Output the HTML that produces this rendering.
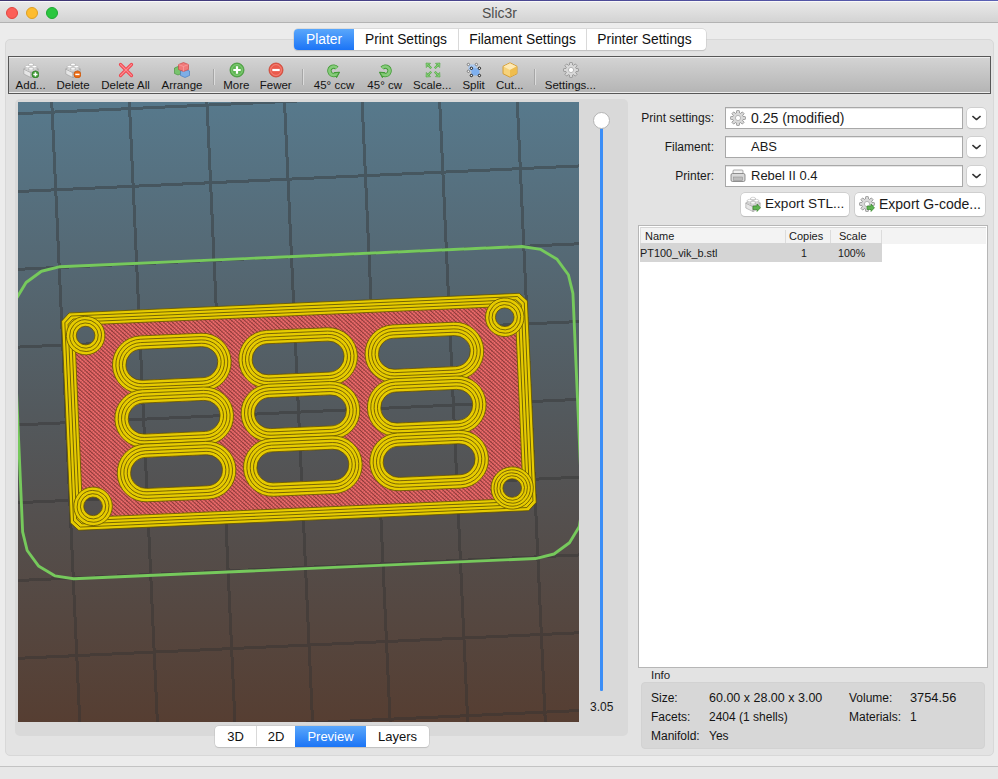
<!DOCTYPE html>
<html><head><meta charset="utf-8">
<style>
*{box-sizing:border-box;margin:0;padding:0}
html,body{width:998px;height:779px;overflow:hidden}
body{position:relative;background:#ececec;font-family:"Liberation Sans",sans-serif;color:#1a1a1a}
.a{position:absolute}
.t{position:absolute;white-space:nowrap;line-height:1}
#topline{left:0;top:0;width:998px;height:1px;background:linear-gradient(90deg,#3e3470,#4a4690 50%,#5a60b4)}
#titlebar{left:0;top:1px;width:998px;height:22px;background:linear-gradient(#e9e9e9,#d3d3d3);border-top:1px solid #f9f9f9;border-bottom:1px solid #b3b3b3}
.tl{position:absolute;top:5px;width:12px;height:12px;border-radius:50%}
#panel{left:5px;top:39px;width:989px;height:717px;background:#e3e3e3;border:1px solid #d8d8d8;border-radius:5px}
#tabs{left:294px;top:29px;width:412px;height:20.5px;background:#fff;border-radius:4px;box-shadow:0 0 0 0.5px #c8c8c8,0 1px 1px rgba(0,0,0,0.18)}
.seg{position:absolute;top:0;height:20.5px;font-size:13.8px;text-align:center;line-height:21px;color:#111}
.sel{background:linear-gradient(#5aa7fb,#1b74f6);color:#fff}
.sep{position:absolute;top:0;width:1px;height:20.5px;background:#d9d9d9}
#toolbar{left:8px;top:56px;width:983px;height:38px;border:1px solid #575757;background:#ededed}
#tbin{position:absolute;left:0;top:1px;right:0;bottom:1px;background:linear-gradient(#d3d3d3,#b5b5b5)}
.lbl{position:absolute;top:80px;font-size:11.5px;color:#141414;transform:translateX(-50%);white-space:nowrap;line-height:1}
.ic{position:absolute;top:62px;width:16px;height:16px}
.tsep{position:absolute;top:69px;width:1px;height:16px;background:#a6a6a6;box-shadow:1px 0 0 #dcdcdc}
#leftc{left:15px;top:99px;width:613px;height:637px;background:#d9d9d9;border-radius:5px}
#vp{left:18px;top:102px;width:561px;height:620px}
.rl{position:absolute;font-size:12px;color:#1a1a1a;text-align:right;white-space:nowrap;line-height:1}
.combo{position:absolute;left:725px;width:238px;height:22px;background:#fff;border:1px solid #a8a8a8;box-shadow:inset 0 1px 0 #e6e6e6}
.ddb{position:absolute;left:967px;width:19px;height:20px;background:#fff;border-radius:4px;box-shadow:0 0 0 0.5px #bdbdbd,0 1px 1px rgba(0,0,0,0.15)}
.btn{position:absolute;top:193px;height:23px;background:#fff;border-radius:4px;box-shadow:0 0 0 0.5px #bcbcbc,0 1px 1px rgba(0,0,0,0.15)}
#list{left:638px;top:225px;width:350px;height:443px;background:#fff;border:1px solid #b6b6b6}
#info{left:641px;top:682px;width:344px;height:67px;background:#d7d7d7;border:1px solid #d2d2d2;border-radius:4px}
.it{position:absolute;font-size:12px;color:#141414;white-space:nowrap;line-height:1}
#vbtns{left:215px;top:726px;width:214px;height:20.5px;background:#fff;border-radius:4px;box-shadow:0 0 0 0.5px #c0c0c0,0 1px 1px rgba(0,0,0,0.15)}
.vseg{position:absolute;top:0;height:20.5px;font-size:13px;text-align:center;line-height:21px;color:#111}
.vseg.sel,.seg.sel{color:#fff}
#status{left:0;top:766px;width:998px;height:13px;background:#e7e7e7;border-top:1px solid #c3c3c3}
</style></head><body>
<div class="a" id="topline"></div>
<div class="a" id="titlebar">
 <div class="tl" style="left:6px;background:#fc5f58;border:1px solid #e1463f"></div>
 <div class="tl" style="left:26px;background:#fdbc2f;border:1px solid #de9f22"></div>
 <div class="tl" style="left:46px;background:#2bc63f;border:1px solid #1ea831"></div>
 <div class="t" style="left:482px;top:4px;font-size:14px;color:#4d4d4d">Slic3r</div>
</div>
<div class="a" id="panel"></div>
<div class="a" id="tabs">
 <div class="seg sel" style="left:0;width:60px;border-radius:4px 0 0 4px">Plater</div>
 <div class="seg" style="left:60px;width:104px">Print Settings</div>
 <div class="sep" style="left:164px"></div>
 <div class="seg" style="left:165px;width:127px">Filament Settings</div>
 <div class="sep" style="left:292px"></div>
 <div class="seg" style="left:291px;width:119px">Printer Settings</div>
</div>
<div class="a" id="toolbar"><div id="tbin"></div></div>
<div class="lbl" style="left:30.6px">Add...</div>
<div class="lbl" style="left:73.1px">Delete</div>
<div class="lbl" style="left:125.5px">Delete All</div>
<div class="lbl" style="left:182px">Arrange</div>
<div class="lbl" style="left:236.3px">More</div>
<div class="lbl" style="left:275.7px">Fewer</div>
<div class="lbl" style="left:334px">45° ccw</div>
<div class="lbl" style="left:384.7px">45° cw</div>
<div class="lbl" style="left:432.2px">Scale...</div>
<div class="lbl" style="left:473.6px">Split</div>
<div class="lbl" style="left:509.8px">Cut...</div>
<div class="lbl" style="left:570.3px">Settings...</div>
<svg class="a" style="left:23px;top:62px" width="16" height="16" viewBox="0 0 16 16"><g stroke="#9c9c9c" stroke-width="0.6" stroke-linejoin="round">
<path d="M0.8,7 L8,10.6 L8,15.6 L0.8,12 Z" fill="#e6e6e6"/>
<path d="M8,10.6 L15.2,7 L15.2,12 L8,15.6 Z" fill="#cdcdcd"/>
<path d="M0.8,7 L8,3.4 L15.2,7 L8,10.6 Z" fill="#f6f6f6"/>
</g><path d="M5.6,2.4 V4.0 A2.4,1.2 0 0 0 10.4,4.0 V2.4 Z" fill="#e2e2e2" stroke="#a0a0a0" stroke-width="0.45"/><ellipse cx="8" cy="2.4" rx="2.4" ry="1.2" fill="#ffffff" stroke="#a8a8a8" stroke-width="0.45"/><path d="M2.1999999999999997,4.6 V6.199999999999999 A2.4,1.2 0 0 0 7.0,6.199999999999999 V4.6 Z" fill="#e2e2e2" stroke="#a0a0a0" stroke-width="0.45"/><ellipse cx="4.6" cy="4.6" rx="2.4" ry="1.2" fill="#ffffff" stroke="#a8a8a8" stroke-width="0.45"/><path d="M9.0,4.6 V6.199999999999999 A2.4,1.2 0 0 0 13.8,6.199999999999999 V4.6 Z" fill="#e2e2e2" stroke="#a0a0a0" stroke-width="0.45"/><ellipse cx="11.4" cy="4.6" rx="2.4" ry="1.2" fill="#ffffff" stroke="#a8a8a8" stroke-width="0.45"/><path d="M5.6,6.8 V8.4 A2.4,1.2 0 0 0 10.4,8.4 V6.8 Z" fill="#e2e2e2" stroke="#a0a0a0" stroke-width="0.45"/><ellipse cx="8" cy="6.8" rx="2.4" ry="1.2" fill="#ffffff" stroke="#a8a8a8" stroke-width="0.45"/><circle cx="12.4" cy="12.4" r="3.5" fill="#3f9b34" stroke="#2b7a22" stroke-width="0.6"/><path d="M12.4,10.3 V14.5 M10.3,12.4 H14.5" stroke="#fff" stroke-width="1.5"/></svg>
<svg class="a" style="left:65px;top:62px" width="16" height="16" viewBox="0 0 16 16"><g stroke="#9c9c9c" stroke-width="0.6" stroke-linejoin="round">
<path d="M0.8,7 L8,10.6 L8,15.6 L0.8,12 Z" fill="#e6e6e6"/>
<path d="M8,10.6 L15.2,7 L15.2,12 L8,15.6 Z" fill="#cdcdcd"/>
<path d="M0.8,7 L8,3.4 L15.2,7 L8,10.6 Z" fill="#f6f6f6"/>
</g><path d="M5.6,2.4 V4.0 A2.4,1.2 0 0 0 10.4,4.0 V2.4 Z" fill="#e2e2e2" stroke="#a0a0a0" stroke-width="0.45"/><ellipse cx="8" cy="2.4" rx="2.4" ry="1.2" fill="#ffffff" stroke="#a8a8a8" stroke-width="0.45"/><path d="M2.1999999999999997,4.6 V6.199999999999999 A2.4,1.2 0 0 0 7.0,6.199999999999999 V4.6 Z" fill="#e2e2e2" stroke="#a0a0a0" stroke-width="0.45"/><ellipse cx="4.6" cy="4.6" rx="2.4" ry="1.2" fill="#ffffff" stroke="#a8a8a8" stroke-width="0.45"/><path d="M9.0,4.6 V6.199999999999999 A2.4,1.2 0 0 0 13.8,6.199999999999999 V4.6 Z" fill="#e2e2e2" stroke="#a0a0a0" stroke-width="0.45"/><ellipse cx="11.4" cy="4.6" rx="2.4" ry="1.2" fill="#ffffff" stroke="#a8a8a8" stroke-width="0.45"/><path d="M5.6,6.8 V8.4 A2.4,1.2 0 0 0 10.4,8.4 V6.8 Z" fill="#e2e2e2" stroke="#a0a0a0" stroke-width="0.45"/><ellipse cx="8" cy="6.8" rx="2.4" ry="1.2" fill="#ffffff" stroke="#a8a8a8" stroke-width="0.45"/><circle cx="12.4" cy="12.4" r="3.5" fill="#ea6a12" stroke="#c24f05" stroke-width="0.6"/><path d="M10.3,12.4 H14.5" stroke="#fff" stroke-width="1.5"/></svg>
<svg class="a" style="left:118px;top:62px" width="16" height="16" viewBox="0 0 16 16"><path d="M2.5,2.5 L13.5,13.5 M13.5,2.5 L2.5,13.5" stroke="#f0454e" stroke-width="3.2" stroke-linecap="round"/><path d="M2.5,2.5 L13.5,13.5 M13.5,2.5 L2.5,13.5" stroke="#ff8a8f" stroke-width="1.2" stroke-linecap="round"/></svg>
<svg class="a" style="left:174px;top:62px" width="16" height="16" viewBox="0 0 16 16"><path d="M0.5,6 L4,4.5 L7.5,6 L7.5,11.5 L4,13 L0.5,11.5 Z" fill="#79c36d" stroke="#3c8f33" stroke-width="0.6"/>
<path d="M6.5,9 L11,7 L15.5,9 L15.5,13.5 L11,15.5 L6.5,13.5 Z" fill="#7eaee6" stroke="#3a74c0" stroke-width="0.6"/>
<path d="M4.5,2.5 L9.5,0.5 L14.5,2.5 L14.5,7.5 L9.5,9.5 L4.5,7.5 Z" fill="#f07a7a" stroke="#c83c3c" stroke-width="0.6"/>
<path d="M4.5,2.5 L9.5,4.5 L14.5,2.5 M9.5,4.5 V9.5" fill="none" stroke="#ffb0b0" stroke-width="0.5"/></svg>
<svg class="a" style="left:229px;top:62px" width="16" height="16" viewBox="0 0 16 16"><circle cx="8" cy="8" r="7" fill="#5fb653" stroke="#3b9131" stroke-width="0.8"/><circle cx="8" cy="8" r="5.4" fill="none" stroke="#9ad690" stroke-width="0.6"/><path d="M8,4.3 V11.7 M4.3,8 H11.7" stroke="#fff" stroke-width="2.2"/></svg>
<svg class="a" style="left:268px;top:62px" width="16" height="16" viewBox="0 0 16 16"><circle cx="8" cy="8" r="7" fill="#ea5a4c" stroke="#c9402f" stroke-width="0.8"/><circle cx="8" cy="8" r="5.4" fill="none" stroke="#f6a398" stroke-width="0.6"/><path d="M4.3,8 H11.7" stroke="#fff" stroke-width="2.2"/></svg>
<svg class="a" style="left:326px;top:63px" width="16" height="16" viewBox="0 0 16 16"><path d="M10.82,5.10 A4.2,4.2 0 1 0 10.01,11.24" fill="none" stroke="#3f9a33" stroke-width="4.4"/><path d="M8.2,9.6 L13.6,9.2 L10.6,14.6 Z" fill="#3f9a33" stroke="#3f9a33" stroke-width="1" stroke-linejoin="round"/><path d="M10.82,5.10 A4.2,4.2 0 1 0 10.01,11.24" fill="none" stroke="#86cb7a" stroke-width="2.8"/><path d="M9.3,10.2 L12.3,10 L10.6,13 Z" fill="#86cb7a"/></svg>
<svg class="a" style="left:377px;top:63px" width="16" height="16" viewBox="0 0 16 16"><g transform="translate(16,0) scale(-1,1)"><path d="M10.82,5.10 A4.2,4.2 0 1 0 10.01,11.24" fill="none" stroke="#3f9a33" stroke-width="4.4"/><path d="M8.2,9.6 L13.6,9.2 L10.6,14.6 Z" fill="#3f9a33" stroke="#3f9a33" stroke-width="1" stroke-linejoin="round"/><path d="M10.82,5.10 A4.2,4.2 0 1 0 10.01,11.24" fill="none" stroke="#86cb7a" stroke-width="2.8"/><path d="M9.3,10.2 L12.3,10 L10.6,13 Z" fill="#86cb7a"/></g></svg>
<svg class="a" style="left:425px;top:62px" width="16" height="16" viewBox="0 0 16 16"><path d="M1,1 L5.6,1.3 L1.3,5.6 Z" fill="#8ad27c" stroke="#4ca23e" stroke-width="0.6" stroke-linejoin="round"/><path d="M2.8,2.8 L6.2,6.2" stroke="#4ca23e" stroke-width="2.2"/><path d="M2.8,2.8 L6.1,6.1" stroke="#8ad27c" stroke-width="1.1"/><g transform="translate(16,0) scale(-1,1)"><path d="M1,1 L5.6,1.3 L1.3,5.6 Z" fill="#8ad27c" stroke="#4ca23e" stroke-width="0.6" stroke-linejoin="round"/><path d="M2.8,2.8 L6.2,6.2" stroke="#4ca23e" stroke-width="2.2"/><path d="M2.8,2.8 L6.1,6.1" stroke="#8ad27c" stroke-width="1.1"/></g><g transform="translate(0,16) scale(1,-1)"><path d="M1,1 L5.6,1.3 L1.3,5.6 Z" fill="#8ad27c" stroke="#4ca23e" stroke-width="0.6" stroke-linejoin="round"/><path d="M2.8,2.8 L6.2,6.2" stroke="#4ca23e" stroke-width="2.2"/><path d="M2.8,2.8 L6.1,6.1" stroke="#8ad27c" stroke-width="1.1"/></g><g transform="translate(16,16) scale(-1,-1)"><path d="M1,1 L5.6,1.3 L1.3,5.6 Z" fill="#8ad27c" stroke="#4ca23e" stroke-width="0.6" stroke-linejoin="round"/><path d="M2.8,2.8 L6.2,6.2" stroke="#4ca23e" stroke-width="2.2"/><path d="M2.8,2.8 L6.1,6.1" stroke="#8ad27c" stroke-width="1.1"/></g></svg>
<svg class="a" style="left:466px;top:62px" width="16" height="16" viewBox="0 0 16 16"><rect x="2.4" y="2.5" width="8" height="6.8" fill="#a9c8f0"/>
<rect x="5.4" y="6.3" width="8" height="7.2" fill="#7fb0ee"/>
<g fill="#f4f4f4" stroke="#707070" stroke-width="0.9">
<circle cx="2.4" cy="2.5" r="1.2"/><circle cx="10.4" cy="2.5" r="1.2"/><circle cx="2.4" cy="9.3" r="1.2"/>
</g>
<g fill="#f4f4f4" stroke="#151515" stroke-width="1">
<circle cx="5.4" cy="6.3" r="1.2"/><circle cx="13.4" cy="6.3" r="1.2"/><circle cx="5.4" cy="13.5" r="1.2"/><circle cx="13.4" cy="13.5" r="1.2"/>
</g></svg>
<svg class="a" style="left:502px;top:62px" width="16" height="16" viewBox="0 0 16 16"><path d="M8,0.8 L15,4.3 L15,11.7 L8,15.2 L1,11.7 L1,4.3 Z" fill="#f6d27a" stroke="#d49a2a" stroke-width="0.9"/>
<path d="M1.5,4.5 L8,8 L14.5,4.5 L8,1.3 Z" fill="#fde9b5"/>
<path d="M8,8 L8,14.8 L14.6,11.5 L14.6,4.6 Z" fill="#efbd4e"/></svg>
<svg class="a" style="left:563px;top:62px" width="16" height="16" viewBox="0 0 16 16"><g fill="#d9d9d9" stroke="#8e8e8e" stroke-width="0.8"><rect x="6.6" y="0.6" width="2.8" height="4" rx="0.4" transform="rotate(0 8 8)"/><rect x="6.6" y="0.6" width="2.8" height="4" rx="0.4" transform="rotate(45 8 8)"/><rect x="6.6" y="0.6" width="2.8" height="4" rx="0.4" transform="rotate(90 8 8)"/><rect x="6.6" y="0.6" width="2.8" height="4" rx="0.4" transform="rotate(135 8 8)"/><rect x="6.6" y="0.6" width="2.8" height="4" rx="0.4" transform="rotate(180 8 8)"/><rect x="6.6" y="0.6" width="2.8" height="4" rx="0.4" transform="rotate(225 8 8)"/><rect x="6.6" y="0.6" width="2.8" height="4" rx="0.4" transform="rotate(270 8 8)"/><rect x="6.6" y="0.6" width="2.8" height="4" rx="0.4" transform="rotate(315 8 8)"/><circle cx="8" cy="8" r="5.3"/></g><g fill="#d9d9d9"><rect x="7" y="1.4" width="2" height="4" transform="rotate(0 8 8)"/><rect x="7" y="1.4" width="2" height="4" transform="rotate(45 8 8)"/><rect x="7" y="1.4" width="2" height="4" transform="rotate(90 8 8)"/><rect x="7" y="1.4" width="2" height="4" transform="rotate(135 8 8)"/><rect x="7" y="1.4" width="2" height="4" transform="rotate(180 8 8)"/><rect x="7" y="1.4" width="2" height="4" transform="rotate(225 8 8)"/><rect x="7" y="1.4" width="2" height="4" transform="rotate(270 8 8)"/><rect x="7" y="1.4" width="2" height="4" transform="rotate(315 8 8)"/><circle cx="8" cy="8" r="4.9"/></g><circle cx="8" cy="8" r="2.6" fill="#ffffff" stroke="#b0b0b0" stroke-width="0.9"/></svg>
<div class="tsep" style="left:213px"></div>
<div class="tsep" style="left:302px"></div>
<div class="tsep" style="left:534px"></div>
<div class="a" id="leftc"></div>
<div class="a" id="vp"><svg width="561" height="620" viewBox="0 0 561 620" style="display:block">
<defs>
<linearGradient id="bg" x1="0" y1="0" x2="0" y2="1">
<stop offset="0" stop-color="#57798c"/>
<stop offset="0.5" stop-color="#53595d"/>
<stop offset="1" stop-color="#563e32"/>
</linearGradient>
<pattern id="infill" width="0.38" height="0.3" patternUnits="userSpaceOnUse" patternTransform="rotate(-45)">
<rect width="0.38" height="0.3" fill="#ec6b6b"/>
<rect width="0.13" height="0.3" fill="#8e3a3a"/>
<rect x="0.13" width="0.25" height="0.1" fill="#c85656"/>
</pattern>
</defs>
<rect width="561" height="620" fill="url(#bg)"/>
<g stroke="#323232" opacity="0.42" stroke-width="3" shape-rendering="crispEdges">
<line x1="0" y1="-66.1" x2="561" y2="-91.6255"/>
<line x1="0" y1="11.7" x2="561" y2="-13.8255"/>
<line x1="0" y1="89.5" x2="561" y2="63.9745"/>
<line x1="0" y1="167.3" x2="561" y2="141.7745"/>
<line x1="0" y1="245.1" x2="561" y2="219.5745"/>
<line x1="0" y1="322.9" x2="561" y2="297.3745"/>
<line x1="0" y1="400.7" x2="561" y2="375.1745"/>
<line x1="0" y1="478.5" x2="561" y2="452.9745"/>
<line x1="0" y1="556.3" x2="561" y2="530.7745"/>
<line x1="0" y1="634.1" x2="561" y2="608.5745"/>
<line x1="0" y1="711.9" x2="561" y2="686.3745"/>
<line x1="-43.84" y1="0" x2="-15.816" y2="620"/>
<line x1="33.75" y1="0" x2="61.774" y2="620"/>
<line x1="111.34" y1="0" x2="139.364" y2="620"/>
<line x1="188.93" y1="0" x2="216.954" y2="620"/>
<line x1="266.52" y1="0" x2="294.544" y2="620"/>
<line x1="344.11" y1="0" x2="372.134" y2="620"/>
<line x1="421.7" y1="0" x2="449.724" y2="620"/>
<line x1="499.29" y1="0" x2="527.314" y2="620"/>
<line x1="576.88" y1="0" x2="604.904" y2="620"/>
<line x1="654.47" y1="0" x2="682.494" y2="620"/>
</g>
<g transform="matrix(7.762,-0.339,0.339,7.762,43.3,211.3)"><path d="M59.6,-6 L62.0109,-5.5204 L64.0548,-4.1548 L65.4204,-2.1109 L65.9,0.3 L65.9,27.9 L65.4204,30.3109 L64.0548,32.3548 L62.0109,33.7204 L59.6,34.2 L0.1,34.2 L-2.3109,33.7204 L-4.3548,32.3548 L-5.7204,30.3109 L-6.2,27.9 L-6.2,0.3 L-5.7204,-2.1109 L-4.3548,-4.1548 L-2.3109,-5.5204 L0.1,-6 Z" fill="none" stroke="#76c95c" stroke-width="0.37" stroke-linejoin="round"/></g>
<g transform="matrix(7.762,-0.339,0.339,7.762,43.3,211.3)">
<path d="M1.8787,1.5 L58.1213,1.5 L58.5,1.8787 L58.5,26.1213 L58.1213,26.5 L1.8787,26.5 L1.5,26.1213 L1.5,1.8787 Z M10.01,5.07 L17.85,5.07 A2,2 0 0 1 17.85,9.07 L10.01,9.07 A2,2 0 0 1 10.01,5.07 Z M10.01,12 L17.85,12 A2,2 0 0 1 17.85,16 L10.01,16 A2,2 0 0 1 10.01,12 Z M10.01,19 L17.85,19 A2,2 0 0 1 17.85,23 L10.01,23 A2,2 0 0 1 10.01,19 Z M26.28,5.07 L34.12,5.07 A2,2 0 0 1 34.12,9.07 L26.28,9.07 A2,2 0 0 1 26.28,5.07 Z M26.28,12 L34.12,12 A2,2 0 0 1 34.12,16 L26.28,16 A2,2 0 0 1 26.28,12 Z M26.28,19 L34.12,19 A2,2 0 0 1 34.12,23 L26.28,23 A2,2 0 0 1 26.28,19 Z M42.55,5.07 L50.39,5.07 A2,2 0 0 1 50.39,9.07 L42.55,9.07 A2,2 0 0 1 42.55,5.07 Z M42.55,12 L50.39,12 A2,2 0 0 1 50.39,16 L42.55,16 A2,2 0 0 1 42.55,12 Z M42.55,19 L50.39,19 A2,2 0 0 1 50.39,23 L42.55,23 A2,2 0 0 1 42.55,19 Z M1.8,3 A1.2,1.2 0 1 0 4.2,3 A1.2,1.2 0 1 0 1.8,3 Z M55.8,3 A1.2,1.2 0 1 0 58.2,3 A1.2,1.2 0 1 0 55.8,3 Z M1.8,25 A1.2,1.2 0 1 0 4.2,25 A1.2,1.2 0 1 0 1.8,25 Z M55.8,25 A1.2,1.2 0 1 0 58.2,25 A1.2,1.2 0 1 0 55.8,25 Z" fill="url(#infill)" fill-rule="evenodd"/>
<path d="M1.1186,0.2025 L58.8814,0.2025 L59.7975,1.1186 L59.7975,26.8814 L58.8814,27.7975 L1.1186,27.7975 L0.2025,26.8814 L0.2025,1.1186 Z" fill="none" stroke="#e6cb00" stroke-width="0.42500000000000004" stroke-linejoin="miter"/>
<path d="M1.3559,0.6075 L58.6441,0.6075 L59.3925,1.3559 L59.3925,26.6441 L58.6441,27.3925 L1.3559,27.3925 L0.6075,26.6441 L0.6075,1.3559 Z" fill="none" stroke="#e6cb00" stroke-width="0.42500000000000004" stroke-linejoin="miter"/>
<path d="M1.5931,1.0125 L58.4069,1.0125 L58.9875,1.5931 L58.9875,26.4069 L58.4069,26.9875 L1.5931,26.9875 L1.0125,26.4069 L1.0125,1.5931 Z" fill="none" stroke="#e6cb00" stroke-width="0.42500000000000004" stroke-linejoin="miter"/>
<path d="M1.8304,1.4175 L58.1696,1.4175 L58.5825,1.8304 L58.5825,26.1696 L58.1696,26.5825 L1.8304,26.5825 L1.4175,26.1696 L1.4175,1.8304 Z" fill="none" stroke="#e6cb00" stroke-width="0.42500000000000004" stroke-linejoin="miter"/>
<path d="M1,0 L59,0 L60,1 L60,27 L59,28 L1,28 L0,27 L0,1 Z" fill="none" stroke="#5f4f00" stroke-width="0.1" stroke-linejoin="miter"/>
<path d="M1.2372,0.405 L58.7628,0.405 L59.595,1.2372 L59.595,26.7628 L58.7628,27.595 L1.2372,27.595 L0.405,26.7628 L0.405,1.2372 Z" fill="none" stroke="#5f4f00" stroke-width="0.1" stroke-linejoin="miter"/>
<path d="M1.4745,0.81 L58.5255,0.81 L59.19,1.4745 L59.19,26.5255 L58.5255,27.19 L1.4745,27.19 L0.81,26.5255 L0.81,1.4745 Z" fill="none" stroke="#5f4f00" stroke-width="0.1" stroke-linejoin="miter"/>
<path d="M1.7117,1.215 L58.2883,1.215 L58.785,1.7117 L58.785,26.2883 L58.2883,26.785 L1.7117,26.785 L1.215,26.2883 L1.215,1.7117 Z" fill="none" stroke="#5f4f00" stroke-width="0.1" stroke-linejoin="miter"/>
<path d="M1.949,1.62 L58.051,1.62 L58.38,1.949 L58.38,26.051 L58.051,26.38 L1.949,26.38 L1.62,26.051 L1.62,1.949 Z" fill="none" stroke="#5f4f00" stroke-width="0.1" stroke-linejoin="miter"/>
<path d="M10.01,4.855 L17.85,4.855 A2.215,2.215 0 0 1 17.85,9.285 L10.01,9.285 A2.215,2.215 0 0 1 10.01,4.855 Z" fill="none" stroke="#e6cb00" stroke-width="0.45"/>
<path d="M10.01,4.425 L17.85,4.425 A2.645,2.645 0 0 1 17.85,9.715 L10.01,9.715 A2.645,2.645 0 0 1 10.01,4.425 Z" fill="none" stroke="#e6cb00" stroke-width="0.45"/>
<path d="M10.01,3.995 L17.85,3.995 A3.075,3.075 0 0 1 17.85,10.145 L10.01,10.145 A3.075,3.075 0 0 1 10.01,3.995 Z" fill="none" stroke="#e6cb00" stroke-width="0.45"/>
<path d="M10.01,3.565 L17.85,3.565 A3.505,3.505 0 0 1 17.85,10.575 L10.01,10.575 A3.505,3.505 0 0 1 10.01,3.565 Z" fill="none" stroke="#e6cb00" stroke-width="0.45"/>
<path d="M10.01,5.07 L17.85,5.07 A2,2 0 0 1 17.85,9.07 L10.01,9.07 A2,2 0 0 1 10.01,5.07 Z" fill="none" stroke="#5f4f00" stroke-width="0.1"/>
<path d="M10.01,4.64 L17.85,4.64 A2.43,2.43 0 0 1 17.85,9.5 L10.01,9.5 A2.43,2.43 0 0 1 10.01,4.64 Z" fill="none" stroke="#5f4f00" stroke-width="0.1"/>
<path d="M10.01,4.21 L17.85,4.21 A2.86,2.86 0 0 1 17.85,9.93 L10.01,9.93 A2.86,2.86 0 0 1 10.01,4.21 Z" fill="none" stroke="#5f4f00" stroke-width="0.1"/>
<path d="M10.01,3.78 L17.85,3.78 A3.29,3.29 0 0 1 17.85,10.36 L10.01,10.36 A3.29,3.29 0 0 1 10.01,3.78 Z" fill="none" stroke="#5f4f00" stroke-width="0.1"/>
<path d="M10.01,3.35 L17.85,3.35 A3.72,3.72 0 0 1 17.85,10.79 L10.01,10.79 A3.72,3.72 0 0 1 10.01,3.35 Z" fill="none" stroke="#5f4f00" stroke-width="0.1"/>
<path d="M10.01,11.785 L17.85,11.785 A2.215,2.215 0 0 1 17.85,16.215 L10.01,16.215 A2.215,2.215 0 0 1 10.01,11.785 Z" fill="none" stroke="#e6cb00" stroke-width="0.45"/>
<path d="M10.01,11.355 L17.85,11.355 A2.645,2.645 0 0 1 17.85,16.645 L10.01,16.645 A2.645,2.645 0 0 1 10.01,11.355 Z" fill="none" stroke="#e6cb00" stroke-width="0.45"/>
<path d="M10.01,10.925 L17.85,10.925 A3.075,3.075 0 0 1 17.85,17.075 L10.01,17.075 A3.075,3.075 0 0 1 10.01,10.925 Z" fill="none" stroke="#e6cb00" stroke-width="0.45"/>
<path d="M10.01,10.495 L17.85,10.495 A3.505,3.505 0 0 1 17.85,17.505 L10.01,17.505 A3.505,3.505 0 0 1 10.01,10.495 Z" fill="none" stroke="#e6cb00" stroke-width="0.45"/>
<path d="M10.01,12 L17.85,12 A2,2 0 0 1 17.85,16 L10.01,16 A2,2 0 0 1 10.01,12 Z" fill="none" stroke="#5f4f00" stroke-width="0.1"/>
<path d="M10.01,11.57 L17.85,11.57 A2.43,2.43 0 0 1 17.85,16.43 L10.01,16.43 A2.43,2.43 0 0 1 10.01,11.57 Z" fill="none" stroke="#5f4f00" stroke-width="0.1"/>
<path d="M10.01,11.14 L17.85,11.14 A2.86,2.86 0 0 1 17.85,16.86 L10.01,16.86 A2.86,2.86 0 0 1 10.01,11.14 Z" fill="none" stroke="#5f4f00" stroke-width="0.1"/>
<path d="M10.01,10.71 L17.85,10.71 A3.29,3.29 0 0 1 17.85,17.29 L10.01,17.29 A3.29,3.29 0 0 1 10.01,10.71 Z" fill="none" stroke="#5f4f00" stroke-width="0.1"/>
<path d="M10.01,10.28 L17.85,10.28 A3.72,3.72 0 0 1 17.85,17.72 L10.01,17.72 A3.72,3.72 0 0 1 10.01,10.28 Z" fill="none" stroke="#5f4f00" stroke-width="0.1"/>
<path d="M10.01,18.785 L17.85,18.785 A2.215,2.215 0 0 1 17.85,23.215 L10.01,23.215 A2.215,2.215 0 0 1 10.01,18.785 Z" fill="none" stroke="#e6cb00" stroke-width="0.45"/>
<path d="M10.01,18.355 L17.85,18.355 A2.645,2.645 0 0 1 17.85,23.645 L10.01,23.645 A2.645,2.645 0 0 1 10.01,18.355 Z" fill="none" stroke="#e6cb00" stroke-width="0.45"/>
<path d="M10.01,17.925 L17.85,17.925 A3.075,3.075 0 0 1 17.85,24.075 L10.01,24.075 A3.075,3.075 0 0 1 10.01,17.925 Z" fill="none" stroke="#e6cb00" stroke-width="0.45"/>
<path d="M10.01,17.495 L17.85,17.495 A3.505,3.505 0 0 1 17.85,24.505 L10.01,24.505 A3.505,3.505 0 0 1 10.01,17.495 Z" fill="none" stroke="#e6cb00" stroke-width="0.45"/>
<path d="M10.01,19 L17.85,19 A2,2 0 0 1 17.85,23 L10.01,23 A2,2 0 0 1 10.01,19 Z" fill="none" stroke="#5f4f00" stroke-width="0.1"/>
<path d="M10.01,18.57 L17.85,18.57 A2.43,2.43 0 0 1 17.85,23.43 L10.01,23.43 A2.43,2.43 0 0 1 10.01,18.57 Z" fill="none" stroke="#5f4f00" stroke-width="0.1"/>
<path d="M10.01,18.14 L17.85,18.14 A2.86,2.86 0 0 1 17.85,23.86 L10.01,23.86 A2.86,2.86 0 0 1 10.01,18.14 Z" fill="none" stroke="#5f4f00" stroke-width="0.1"/>
<path d="M10.01,17.71 L17.85,17.71 A3.29,3.29 0 0 1 17.85,24.29 L10.01,24.29 A3.29,3.29 0 0 1 10.01,17.71 Z" fill="none" stroke="#5f4f00" stroke-width="0.1"/>
<path d="M10.01,17.28 L17.85,17.28 A3.72,3.72 0 0 1 17.85,24.72 L10.01,24.72 A3.72,3.72 0 0 1 10.01,17.28 Z" fill="none" stroke="#5f4f00" stroke-width="0.1"/>
<path d="M26.28,4.855 L34.12,4.855 A2.215,2.215 0 0 1 34.12,9.285 L26.28,9.285 A2.215,2.215 0 0 1 26.28,4.855 Z" fill="none" stroke="#e6cb00" stroke-width="0.45"/>
<path d="M26.28,4.425 L34.12,4.425 A2.645,2.645 0 0 1 34.12,9.715 L26.28,9.715 A2.645,2.645 0 0 1 26.28,4.425 Z" fill="none" stroke="#e6cb00" stroke-width="0.45"/>
<path d="M26.28,3.995 L34.12,3.995 A3.075,3.075 0 0 1 34.12,10.145 L26.28,10.145 A3.075,3.075 0 0 1 26.28,3.995 Z" fill="none" stroke="#e6cb00" stroke-width="0.45"/>
<path d="M26.28,3.565 L34.12,3.565 A3.505,3.505 0 0 1 34.12,10.575 L26.28,10.575 A3.505,3.505 0 0 1 26.28,3.565 Z" fill="none" stroke="#e6cb00" stroke-width="0.45"/>
<path d="M26.28,5.07 L34.12,5.07 A2,2 0 0 1 34.12,9.07 L26.28,9.07 A2,2 0 0 1 26.28,5.07 Z" fill="none" stroke="#5f4f00" stroke-width="0.1"/>
<path d="M26.28,4.64 L34.12,4.64 A2.43,2.43 0 0 1 34.12,9.5 L26.28,9.5 A2.43,2.43 0 0 1 26.28,4.64 Z" fill="none" stroke="#5f4f00" stroke-width="0.1"/>
<path d="M26.28,4.21 L34.12,4.21 A2.86,2.86 0 0 1 34.12,9.93 L26.28,9.93 A2.86,2.86 0 0 1 26.28,4.21 Z" fill="none" stroke="#5f4f00" stroke-width="0.1"/>
<path d="M26.28,3.78 L34.12,3.78 A3.29,3.29 0 0 1 34.12,10.36 L26.28,10.36 A3.29,3.29 0 0 1 26.28,3.78 Z" fill="none" stroke="#5f4f00" stroke-width="0.1"/>
<path d="M26.28,3.35 L34.12,3.35 A3.72,3.72 0 0 1 34.12,10.79 L26.28,10.79 A3.72,3.72 0 0 1 26.28,3.35 Z" fill="none" stroke="#5f4f00" stroke-width="0.1"/>
<path d="M26.28,11.785 L34.12,11.785 A2.215,2.215 0 0 1 34.12,16.215 L26.28,16.215 A2.215,2.215 0 0 1 26.28,11.785 Z" fill="none" stroke="#e6cb00" stroke-width="0.45"/>
<path d="M26.28,11.355 L34.12,11.355 A2.645,2.645 0 0 1 34.12,16.645 L26.28,16.645 A2.645,2.645 0 0 1 26.28,11.355 Z" fill="none" stroke="#e6cb00" stroke-width="0.45"/>
<path d="M26.28,10.925 L34.12,10.925 A3.075,3.075 0 0 1 34.12,17.075 L26.28,17.075 A3.075,3.075 0 0 1 26.28,10.925 Z" fill="none" stroke="#e6cb00" stroke-width="0.45"/>
<path d="M26.28,10.495 L34.12,10.495 A3.505,3.505 0 0 1 34.12,17.505 L26.28,17.505 A3.505,3.505 0 0 1 26.28,10.495 Z" fill="none" stroke="#e6cb00" stroke-width="0.45"/>
<path d="M26.28,12 L34.12,12 A2,2 0 0 1 34.12,16 L26.28,16 A2,2 0 0 1 26.28,12 Z" fill="none" stroke="#5f4f00" stroke-width="0.1"/>
<path d="M26.28,11.57 L34.12,11.57 A2.43,2.43 0 0 1 34.12,16.43 L26.28,16.43 A2.43,2.43 0 0 1 26.28,11.57 Z" fill="none" stroke="#5f4f00" stroke-width="0.1"/>
<path d="M26.28,11.14 L34.12,11.14 A2.86,2.86 0 0 1 34.12,16.86 L26.28,16.86 A2.86,2.86 0 0 1 26.28,11.14 Z" fill="none" stroke="#5f4f00" stroke-width="0.1"/>
<path d="M26.28,10.71 L34.12,10.71 A3.29,3.29 0 0 1 34.12,17.29 L26.28,17.29 A3.29,3.29 0 0 1 26.28,10.71 Z" fill="none" stroke="#5f4f00" stroke-width="0.1"/>
<path d="M26.28,10.28 L34.12,10.28 A3.72,3.72 0 0 1 34.12,17.72 L26.28,17.72 A3.72,3.72 0 0 1 26.28,10.28 Z" fill="none" stroke="#5f4f00" stroke-width="0.1"/>
<path d="M26.28,18.785 L34.12,18.785 A2.215,2.215 0 0 1 34.12,23.215 L26.28,23.215 A2.215,2.215 0 0 1 26.28,18.785 Z" fill="none" stroke="#e6cb00" stroke-width="0.45"/>
<path d="M26.28,18.355 L34.12,18.355 A2.645,2.645 0 0 1 34.12,23.645 L26.28,23.645 A2.645,2.645 0 0 1 26.28,18.355 Z" fill="none" stroke="#e6cb00" stroke-width="0.45"/>
<path d="M26.28,17.925 L34.12,17.925 A3.075,3.075 0 0 1 34.12,24.075 L26.28,24.075 A3.075,3.075 0 0 1 26.28,17.925 Z" fill="none" stroke="#e6cb00" stroke-width="0.45"/>
<path d="M26.28,17.495 L34.12,17.495 A3.505,3.505 0 0 1 34.12,24.505 L26.28,24.505 A3.505,3.505 0 0 1 26.28,17.495 Z" fill="none" stroke="#e6cb00" stroke-width="0.45"/>
<path d="M26.28,19 L34.12,19 A2,2 0 0 1 34.12,23 L26.28,23 A2,2 0 0 1 26.28,19 Z" fill="none" stroke="#5f4f00" stroke-width="0.1"/>
<path d="M26.28,18.57 L34.12,18.57 A2.43,2.43 0 0 1 34.12,23.43 L26.28,23.43 A2.43,2.43 0 0 1 26.28,18.57 Z" fill="none" stroke="#5f4f00" stroke-width="0.1"/>
<path d="M26.28,18.14 L34.12,18.14 A2.86,2.86 0 0 1 34.12,23.86 L26.28,23.86 A2.86,2.86 0 0 1 26.28,18.14 Z" fill="none" stroke="#5f4f00" stroke-width="0.1"/>
<path d="M26.28,17.71 L34.12,17.71 A3.29,3.29 0 0 1 34.12,24.29 L26.28,24.29 A3.29,3.29 0 0 1 26.28,17.71 Z" fill="none" stroke="#5f4f00" stroke-width="0.1"/>
<path d="M26.28,17.28 L34.12,17.28 A3.72,3.72 0 0 1 34.12,24.72 L26.28,24.72 A3.72,3.72 0 0 1 26.28,17.28 Z" fill="none" stroke="#5f4f00" stroke-width="0.1"/>
<path d="M42.55,4.855 L50.39,4.855 A2.215,2.215 0 0 1 50.39,9.285 L42.55,9.285 A2.215,2.215 0 0 1 42.55,4.855 Z" fill="none" stroke="#e6cb00" stroke-width="0.45"/>
<path d="M42.55,4.425 L50.39,4.425 A2.645,2.645 0 0 1 50.39,9.715 L42.55,9.715 A2.645,2.645 0 0 1 42.55,4.425 Z" fill="none" stroke="#e6cb00" stroke-width="0.45"/>
<path d="M42.55,3.995 L50.39,3.995 A3.075,3.075 0 0 1 50.39,10.145 L42.55,10.145 A3.075,3.075 0 0 1 42.55,3.995 Z" fill="none" stroke="#e6cb00" stroke-width="0.45"/>
<path d="M42.55,3.565 L50.39,3.565 A3.505,3.505 0 0 1 50.39,10.575 L42.55,10.575 A3.505,3.505 0 0 1 42.55,3.565 Z" fill="none" stroke="#e6cb00" stroke-width="0.45"/>
<path d="M42.55,5.07 L50.39,5.07 A2,2 0 0 1 50.39,9.07 L42.55,9.07 A2,2 0 0 1 42.55,5.07 Z" fill="none" stroke="#5f4f00" stroke-width="0.1"/>
<path d="M42.55,4.64 L50.39,4.64 A2.43,2.43 0 0 1 50.39,9.5 L42.55,9.5 A2.43,2.43 0 0 1 42.55,4.64 Z" fill="none" stroke="#5f4f00" stroke-width="0.1"/>
<path d="M42.55,4.21 L50.39,4.21 A2.86,2.86 0 0 1 50.39,9.93 L42.55,9.93 A2.86,2.86 0 0 1 42.55,4.21 Z" fill="none" stroke="#5f4f00" stroke-width="0.1"/>
<path d="M42.55,3.78 L50.39,3.78 A3.29,3.29 0 0 1 50.39,10.36 L42.55,10.36 A3.29,3.29 0 0 1 42.55,3.78 Z" fill="none" stroke="#5f4f00" stroke-width="0.1"/>
<path d="M42.55,3.35 L50.39,3.35 A3.72,3.72 0 0 1 50.39,10.79 L42.55,10.79 A3.72,3.72 0 0 1 42.55,3.35 Z" fill="none" stroke="#5f4f00" stroke-width="0.1"/>
<path d="M42.55,11.785 L50.39,11.785 A2.215,2.215 0 0 1 50.39,16.215 L42.55,16.215 A2.215,2.215 0 0 1 42.55,11.785 Z" fill="none" stroke="#e6cb00" stroke-width="0.45"/>
<path d="M42.55,11.355 L50.39,11.355 A2.645,2.645 0 0 1 50.39,16.645 L42.55,16.645 A2.645,2.645 0 0 1 42.55,11.355 Z" fill="none" stroke="#e6cb00" stroke-width="0.45"/>
<path d="M42.55,10.925 L50.39,10.925 A3.075,3.075 0 0 1 50.39,17.075 L42.55,17.075 A3.075,3.075 0 0 1 42.55,10.925 Z" fill="none" stroke="#e6cb00" stroke-width="0.45"/>
<path d="M42.55,10.495 L50.39,10.495 A3.505,3.505 0 0 1 50.39,17.505 L42.55,17.505 A3.505,3.505 0 0 1 42.55,10.495 Z" fill="none" stroke="#e6cb00" stroke-width="0.45"/>
<path d="M42.55,12 L50.39,12 A2,2 0 0 1 50.39,16 L42.55,16 A2,2 0 0 1 42.55,12 Z" fill="none" stroke="#5f4f00" stroke-width="0.1"/>
<path d="M42.55,11.57 L50.39,11.57 A2.43,2.43 0 0 1 50.39,16.43 L42.55,16.43 A2.43,2.43 0 0 1 42.55,11.57 Z" fill="none" stroke="#5f4f00" stroke-width="0.1"/>
<path d="M42.55,11.14 L50.39,11.14 A2.86,2.86 0 0 1 50.39,16.86 L42.55,16.86 A2.86,2.86 0 0 1 42.55,11.14 Z" fill="none" stroke="#5f4f00" stroke-width="0.1"/>
<path d="M42.55,10.71 L50.39,10.71 A3.29,3.29 0 0 1 50.39,17.29 L42.55,17.29 A3.29,3.29 0 0 1 42.55,10.71 Z" fill="none" stroke="#5f4f00" stroke-width="0.1"/>
<path d="M42.55,10.28 L50.39,10.28 A3.72,3.72 0 0 1 50.39,17.72 L42.55,17.72 A3.72,3.72 0 0 1 42.55,10.28 Z" fill="none" stroke="#5f4f00" stroke-width="0.1"/>
<path d="M42.55,18.785 L50.39,18.785 A2.215,2.215 0 0 1 50.39,23.215 L42.55,23.215 A2.215,2.215 0 0 1 42.55,18.785 Z" fill="none" stroke="#e6cb00" stroke-width="0.45"/>
<path d="M42.55,18.355 L50.39,18.355 A2.645,2.645 0 0 1 50.39,23.645 L42.55,23.645 A2.645,2.645 0 0 1 42.55,18.355 Z" fill="none" stroke="#e6cb00" stroke-width="0.45"/>
<path d="M42.55,17.925 L50.39,17.925 A3.075,3.075 0 0 1 50.39,24.075 L42.55,24.075 A3.075,3.075 0 0 1 42.55,17.925 Z" fill="none" stroke="#e6cb00" stroke-width="0.45"/>
<path d="M42.55,17.495 L50.39,17.495 A3.505,3.505 0 0 1 50.39,24.505 L42.55,24.505 A3.505,3.505 0 0 1 42.55,17.495 Z" fill="none" stroke="#e6cb00" stroke-width="0.45"/>
<path d="M42.55,19 L50.39,19 A2,2 0 0 1 50.39,23 L42.55,23 A2,2 0 0 1 42.55,19 Z" fill="none" stroke="#5f4f00" stroke-width="0.1"/>
<path d="M42.55,18.57 L50.39,18.57 A2.43,2.43 0 0 1 50.39,23.43 L42.55,23.43 A2.43,2.43 0 0 1 42.55,18.57 Z" fill="none" stroke="#5f4f00" stroke-width="0.1"/>
<path d="M42.55,18.14 L50.39,18.14 A2.86,2.86 0 0 1 50.39,23.86 L42.55,23.86 A2.86,2.86 0 0 1 42.55,18.14 Z" fill="none" stroke="#5f4f00" stroke-width="0.1"/>
<path d="M42.55,17.71 L50.39,17.71 A3.29,3.29 0 0 1 50.39,24.29 L42.55,24.29 A3.29,3.29 0 0 1 42.55,17.71 Z" fill="none" stroke="#5f4f00" stroke-width="0.1"/>
<path d="M42.55,17.28 L50.39,17.28 A3.72,3.72 0 0 1 50.39,24.72 L42.55,24.72 A3.72,3.72 0 0 1 42.55,17.28 Z" fill="none" stroke="#5f4f00" stroke-width="0.1"/>
<circle cx="3" cy="3" r="1.4133" fill="none" stroke="#e6cb00" stroke-width="0.4467"/>
<circle cx="3" cy="3" r="1.84" fill="none" stroke="#e6cb00" stroke-width="0.4467"/>
<circle cx="3" cy="3" r="2.2667" fill="none" stroke="#e6cb00" stroke-width="0.4467"/>
<circle cx="3" cy="3" r="1.2" fill="none" stroke="#5f4f00" stroke-width="0.1"/>
<circle cx="3" cy="3" r="1.6267" fill="none" stroke="#5f4f00" stroke-width="0.1"/>
<circle cx="3" cy="3" r="2.0533" fill="none" stroke="#5f4f00" stroke-width="0.1"/>
<circle cx="3" cy="3" r="2.48" fill="none" stroke="#5f4f00" stroke-width="0.1"/>
<circle cx="57" cy="3" r="1.4133" fill="none" stroke="#e6cb00" stroke-width="0.4467"/>
<circle cx="57" cy="3" r="1.84" fill="none" stroke="#e6cb00" stroke-width="0.4467"/>
<circle cx="57" cy="3" r="2.2667" fill="none" stroke="#e6cb00" stroke-width="0.4467"/>
<circle cx="57" cy="3" r="1.2" fill="none" stroke="#5f4f00" stroke-width="0.1"/>
<circle cx="57" cy="3" r="1.6267" fill="none" stroke="#5f4f00" stroke-width="0.1"/>
<circle cx="57" cy="3" r="2.0533" fill="none" stroke="#5f4f00" stroke-width="0.1"/>
<circle cx="57" cy="3" r="2.48" fill="none" stroke="#5f4f00" stroke-width="0.1"/>
<circle cx="3" cy="25" r="1.4133" fill="none" stroke="#e6cb00" stroke-width="0.4467"/>
<circle cx="3" cy="25" r="1.84" fill="none" stroke="#e6cb00" stroke-width="0.4467"/>
<circle cx="3" cy="25" r="2.2667" fill="none" stroke="#e6cb00" stroke-width="0.4467"/>
<circle cx="3" cy="25" r="1.2" fill="none" stroke="#5f4f00" stroke-width="0.1"/>
<circle cx="3" cy="25" r="1.6267" fill="none" stroke="#5f4f00" stroke-width="0.1"/>
<circle cx="3" cy="25" r="2.0533" fill="none" stroke="#5f4f00" stroke-width="0.1"/>
<circle cx="3" cy="25" r="2.48" fill="none" stroke="#5f4f00" stroke-width="0.1"/>
<circle cx="57" cy="25" r="1.39" fill="none" stroke="#e6cb00" stroke-width="0.4"/>
<circle cx="57" cy="25" r="1.77" fill="none" stroke="#e6cb00" stroke-width="0.4"/>
<circle cx="57" cy="25" r="2.15" fill="none" stroke="#e6cb00" stroke-width="0.4"/>
<circle cx="57" cy="25" r="2.53" fill="none" stroke="#e6cb00" stroke-width="0.4"/>
<circle cx="57" cy="25" r="1.2" fill="none" stroke="#5f4f00" stroke-width="0.1"/>
<circle cx="57" cy="25" r="1.58" fill="none" stroke="#5f4f00" stroke-width="0.1"/>
<circle cx="57" cy="25" r="1.96" fill="none" stroke="#5f4f00" stroke-width="0.1"/>
<circle cx="57" cy="25" r="2.34" fill="none" stroke="#5f4f00" stroke-width="0.1"/>
<circle cx="57" cy="25" r="2.72" fill="none" stroke="#5f4f00" stroke-width="0.1"/>
</g>
</svg></div>
<!-- slider -->
<div class="a" style="left:600px;top:126px;width:3px;height:565px;background:#3b8ef7;border-radius:1px"></div>
<div class="a" style="left:593px;top:112px;width:17px;height:17px;border-radius:50%;background:#fff;border:1px solid #b4b4b4"></div>
<div class="t" style="left:590px;top:701px;font-size:12px">3.05</div>
<div class="a" id="vbtns">
 <div class="vseg" style="left:0;width:41px">3D</div>
 <div class="sep" style="left:41px;height:20px"></div>
 <div class="vseg" style="left:41px;width:40px">2D</div>
 <div class="vseg sel" style="left:80px;width:71px">Preview</div>
 <div class="vseg" style="left:151px;width:63px">Layers</div>
</div>
<!-- right panel -->
<div class="rl" style="left:600px;width:114px;top:112px">Print settings:</div>
<div class="rl" style="left:600px;width:114px;top:141px">Filament:</div>
<div class="rl" style="left:600px;width:114px;top:170px">Printer:</div>
<div class="combo" style="top:107px"></div>
<div class="combo" style="top:136px"></div>
<div class="combo" style="top:165px"></div>
<svg class="a" style="left:730px;top:110px" width="16" height="16" viewBox="0 0 16 16"><g fill="#d9d9d9" stroke="#8e8e8e" stroke-width="0.8"><rect x="6.6" y="0.6" width="2.8" height="4" rx="0.4" transform="rotate(0 8 8)"/><rect x="6.6" y="0.6" width="2.8" height="4" rx="0.4" transform="rotate(45 8 8)"/><rect x="6.6" y="0.6" width="2.8" height="4" rx="0.4" transform="rotate(90 8 8)"/><rect x="6.6" y="0.6" width="2.8" height="4" rx="0.4" transform="rotate(135 8 8)"/><rect x="6.6" y="0.6" width="2.8" height="4" rx="0.4" transform="rotate(180 8 8)"/><rect x="6.6" y="0.6" width="2.8" height="4" rx="0.4" transform="rotate(225 8 8)"/><rect x="6.6" y="0.6" width="2.8" height="4" rx="0.4" transform="rotate(270 8 8)"/><rect x="6.6" y="0.6" width="2.8" height="4" rx="0.4" transform="rotate(315 8 8)"/><circle cx="8" cy="8" r="5.3"/></g><g fill="#d9d9d9"><rect x="7" y="1.4" width="2" height="4" transform="rotate(0 8 8)"/><rect x="7" y="1.4" width="2" height="4" transform="rotate(45 8 8)"/><rect x="7" y="1.4" width="2" height="4" transform="rotate(90 8 8)"/><rect x="7" y="1.4" width="2" height="4" transform="rotate(135 8 8)"/><rect x="7" y="1.4" width="2" height="4" transform="rotate(180 8 8)"/><rect x="7" y="1.4" width="2" height="4" transform="rotate(225 8 8)"/><rect x="7" y="1.4" width="2" height="4" transform="rotate(270 8 8)"/><rect x="7" y="1.4" width="2" height="4" transform="rotate(315 8 8)"/><circle cx="8" cy="8" r="4.9"/></g><circle cx="8" cy="8" r="2.6" fill="#ffffff" stroke="#b0b0b0" stroke-width="0.9"/></svg><svg class="a" style="left:730px;top:168px" width="16" height="16" viewBox="0 0 16 16"><rect x="3" y="2" width="10" height="5" rx="1" fill="#f0f0f0" stroke="#888" stroke-width="0.7"/>
<rect x="1" y="5.5" width="14" height="8" rx="1.5" fill="#d8d8d8" stroke="#777" stroke-width="0.8"/>
<rect x="3.5" y="9" width="9" height="3.5" fill="#bcbcbc" stroke="#888" stroke-width="0.5"/></svg>
<div class="t" style="left:751px;top:111px;font-size:14px">0.25 (modified)</div>
<div class="t" style="left:751px;top:140px;font-size:13px">ABS</div>
<div class="t" style="left:751px;top:169px;font-size:13px">Rebel II 0.4</div>
<div class="ddb" style="top:108px"></div>
<div class="ddb" style="top:137px"></div>
<div class="ddb" style="top:166px"></div>
<svg class="a" style="left:967px;top:108px" width="19" height="20" viewBox="0 0 18 19"><path d="M5.5,8 L9,11 L12.5,8" fill="none" stroke="#333" stroke-width="1.4" stroke-linecap="round" stroke-linejoin="round"/></svg><svg class="a" style="left:967px;top:137px" width="19" height="20" viewBox="0 0 18 19"><path d="M5.5,8 L9,11 L12.5,8" fill="none" stroke="#333" stroke-width="1.4" stroke-linecap="round" stroke-linejoin="round"/></svg><svg class="a" style="left:967px;top:166px" width="19" height="20" viewBox="0 0 18 19"><path d="M5.5,8 L9,11 L12.5,8" fill="none" stroke="#333" stroke-width="1.4" stroke-linecap="round" stroke-linejoin="round"/></svg>
<div class="btn" style="left:741px;width:108px"></div>
<div class="btn" style="left:855px;width:130px"></div>
<svg class="a" style="left:745px;top:196px" width="16" height="16" viewBox="0 0 16 16"><g stroke="#9c9c9c" stroke-width="0.6" stroke-linejoin="round">
<path d="M0.8,7 L8,10.6 L8,15.6 L0.8,12 Z" fill="#e6e6e6"/>
<path d="M8,10.6 L15.2,7 L15.2,12 L8,15.6 Z" fill="#cdcdcd"/>
<path d="M0.8,7 L8,3.4 L15.2,7 L8,10.6 Z" fill="#f6f6f6"/>
</g><path d="M5.6,2.4 V4.0 A2.4,1.2 0 0 0 10.4,4.0 V2.4 Z" fill="#e2e2e2" stroke="#a0a0a0" stroke-width="0.45"/><ellipse cx="8" cy="2.4" rx="2.4" ry="1.2" fill="#ffffff" stroke="#a8a8a8" stroke-width="0.45"/><path d="M2.1999999999999997,4.6 V6.199999999999999 A2.4,1.2 0 0 0 7.0,6.199999999999999 V4.6 Z" fill="#e2e2e2" stroke="#a0a0a0" stroke-width="0.45"/><ellipse cx="4.6" cy="4.6" rx="2.4" ry="1.2" fill="#ffffff" stroke="#a8a8a8" stroke-width="0.45"/><path d="M9.0,4.6 V6.199999999999999 A2.4,1.2 0 0 0 13.8,6.199999999999999 V4.6 Z" fill="#e2e2e2" stroke="#a0a0a0" stroke-width="0.45"/><ellipse cx="11.4" cy="4.6" rx="2.4" ry="1.2" fill="#ffffff" stroke="#a8a8a8" stroke-width="0.45"/><path d="M5.6,6.8 V8.4 A2.4,1.2 0 0 0 10.4,8.4 V6.8 Z" fill="#e2e2e2" stroke="#a0a0a0" stroke-width="0.45"/><ellipse cx="8" cy="6.8" rx="2.4" ry="1.2" fill="#ffffff" stroke="#a8a8a8" stroke-width="0.45"/><path d="M8,10 L12,10 L12,8 L15.5,11.8 L12,15.5 L12,13.5 L8,13.5 Z" fill="#5fb451" stroke="#2f7f23" stroke-width="0.6" stroke-linejoin="round"/></svg><svg class="a" style="left:859px;top:196px" width="16" height="16" viewBox="0 0 16 16"><g fill="#d9d9d9" stroke="#8e8e8e" stroke-width="0.8"><rect x="6.6" y="0.6" width="2.8" height="4" rx="0.4" transform="rotate(0 8 8)"/><rect x="6.6" y="0.6" width="2.8" height="4" rx="0.4" transform="rotate(45 8 8)"/><rect x="6.6" y="0.6" width="2.8" height="4" rx="0.4" transform="rotate(90 8 8)"/><rect x="6.6" y="0.6" width="2.8" height="4" rx="0.4" transform="rotate(135 8 8)"/><rect x="6.6" y="0.6" width="2.8" height="4" rx="0.4" transform="rotate(180 8 8)"/><rect x="6.6" y="0.6" width="2.8" height="4" rx="0.4" transform="rotate(225 8 8)"/><rect x="6.6" y="0.6" width="2.8" height="4" rx="0.4" transform="rotate(270 8 8)"/><rect x="6.6" y="0.6" width="2.8" height="4" rx="0.4" transform="rotate(315 8 8)"/><circle cx="8" cy="8" r="5.3"/></g><g fill="#d9d9d9"><rect x="7" y="1.4" width="2" height="4" transform="rotate(0 8 8)"/><rect x="7" y="1.4" width="2" height="4" transform="rotate(45 8 8)"/><rect x="7" y="1.4" width="2" height="4" transform="rotate(90 8 8)"/><rect x="7" y="1.4" width="2" height="4" transform="rotate(135 8 8)"/><rect x="7" y="1.4" width="2" height="4" transform="rotate(180 8 8)"/><rect x="7" y="1.4" width="2" height="4" transform="rotate(225 8 8)"/><rect x="7" y="1.4" width="2" height="4" transform="rotate(270 8 8)"/><rect x="7" y="1.4" width="2" height="4" transform="rotate(315 8 8)"/><circle cx="8" cy="8" r="4.9"/></g><circle cx="8" cy="8" r="2.6" fill="#ffffff" stroke="#b0b0b0" stroke-width="0.9"/><path d="M8,10 L12,10 L12,8 L15.5,11.8 L12,15.5 L12,13.5 L8,13.5 Z" fill="#5fb451" stroke="#2f7f23" stroke-width="0.6" stroke-linejoin="round"/></svg>
<div class="t" style="left:765px;top:197px;font-size:13.6px">Export STL...</div>
<div class="t" style="left:879px;top:197px;font-size:14px">Export G-code...</div>
<div class="a" id="list">
 <div class="a" style="left:1px;top:1px;width:346px;height:17px;background:#f3f3f3;border-top:1px solid #d6d6d6;border-left:1px solid #dedede"></div>
 <div class="t" style="left:6px;top:5px;font-size:11px">Name</div>
 <div class="a" style="left:146px;top:4px;width:1px;height:13px;background:#dcdcdc"></div>
 <div class="t" style="left:150px;top:5px;font-size:11px">Copies</div>
 <div class="a" style="left:191px;top:4px;width:1px;height:13px;background:#dcdcdc"></div>
 <div class="t" style="left:200px;top:5px;font-size:11px">Scale</div>
 <div class="a" style="left:242px;top:4px;width:1px;height:13px;background:#dcdcdc"></div>
 <div class="a" style="left:1px;top:17px;width:242px;height:19px;background:#d5d5d5"></div>
 <div class="t" style="left:1px;top:22px;font-size:10.9px">PT100_vik_b.stl</div>
 <div class="t" style="left:162px;top:22px;font-size:10.6px">1</div>
 <div class="t" style="left:199px;top:22px;font-size:10.6px">100%</div>
</div>
<div class="t" style="left:651px;top:670px;font-size:11.5px;color:#222">Info</div>
<div class="a" id="info"></div>
<div class="it" style="left:651px;top:692px">Size:</div>
<div class="it" style="left:709px;top:692px;font-size:12.5px">60.00 x 28.00 x 3.00</div>
<div class="it" style="left:849px;top:692px">Volume:</div>
<div class="it" style="left:910px;top:692px;font-size:12.8px">3754.56</div>
<div class="it" style="left:651px;top:711px">Facets:</div>
<div class="it" style="left:709px;top:711px">2404 (1 shells)</div>
<div class="it" style="left:849px;top:711px">Materials:</div>
<div class="it" style="left:910px;top:711px">1</div>
<div class="it" style="left:651px;top:730px">Manifold:</div>
<div class="it" style="left:709px;top:730px">Yes</div>
<div class="a" id="status"></div>
</body></html>
